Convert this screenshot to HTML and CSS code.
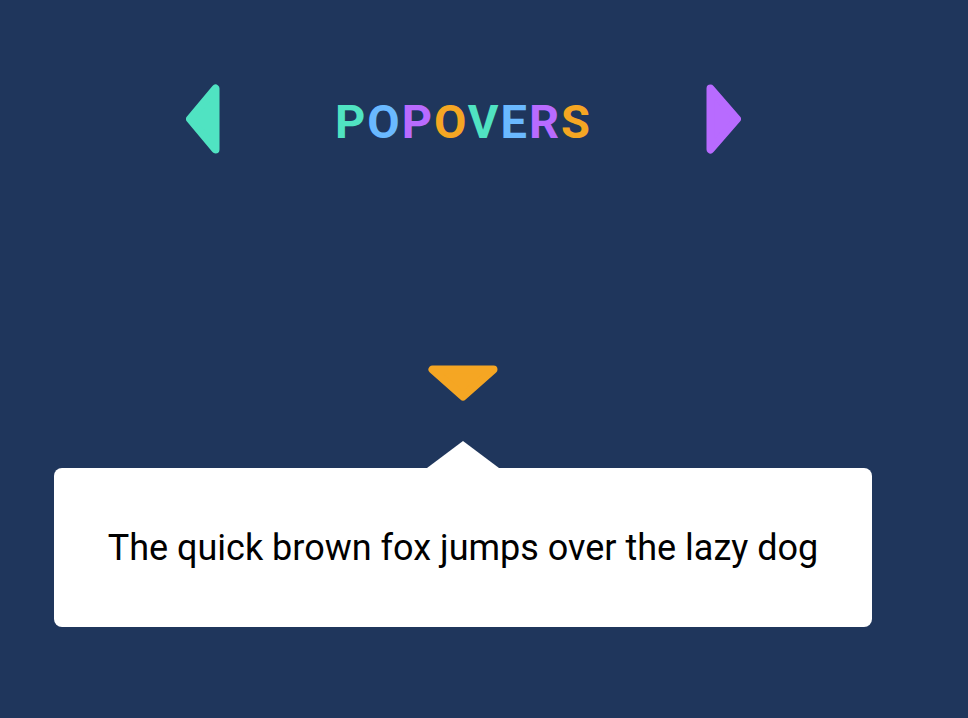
FILE: index.html
```html
<!DOCTYPE html>
<html>
<head>
<meta charset="utf-8">
<link rel="stylesheet" href="styles.css">
</head>
<body>
<div class="stage">
  <div class="header">
    <svg class="nav-arrow" width="34" height="70" viewBox="0 0 34 70"><polygon points="4,35 29.5,4.5 29.5,65.5" fill="#50e3c2" stroke="#50e3c2" stroke-width="8" stroke-linejoin="round"/></svg>
    <h1 class="title"><span class="c1">P</span><span class="c2">O</span><span class="c3">P</span><span class="c4">O</span><span class="c1">V</span><span class="c2">E</span><span class="c3">R</span><span class="c4 last">S</span></h1>
    <svg class="nav-arrow" width="35" height="70" viewBox="0 0 35 70"><polygon points="4.5,4.5 31,35 4.5,65.5" fill="#b86bff" stroke="#b86bff" stroke-width="8" stroke-linejoin="round"/></svg>
  </div>
  <div class="trigger">
    <svg width="70" height="36" viewBox="0 0 70 36"><polygon points="4.5,4.5 65.5,4.5 35,31.5" fill="#f5a623" stroke="#f5a623" stroke-width="8" stroke-linejoin="round"/></svg>
  </div>
  <div class="popover">
    <div class="notch"></div>
    <div class="popover-box">The quick brown fox jumps over the lazy dog</div>
  </div>
</div>
</body>
</html>
```
FILE: styles.css
```css
html, body {
  margin: 0;
  padding: 0;
  background: #1f365c;
  height: 100%;
}
.stage {
  width: 926px;
  display: flex;
  flex-direction: column;
  align-items: center;
  padding-top: 84px;
}
.header {
  width: 555px;
  display: flex;
  justify-content: space-between;
  align-items: center;
}
.nav-arrow {
  display: block;
}
.title {
  margin: 0;
  padding-top: 4px;
  font-family: Roboto, "Liberation Sans", sans-serif;
  font-weight: 700;
  font-size: 47px;
  letter-spacing: 2px;
  line-height: 1;
}
.title .last { letter-spacing: 0; }
.c1 { color: #50e3c2; }
.c2 { color: #6ab9ff; }
.c3 { color: #b86bff; }
.c4 { color: #f5a623; }
.trigger {
  margin-top: 211px;
  display: flex;
}
.trigger svg { display: block; }
.popover {
  margin-top: 40px;
  width: 818px;
  display: flex;
  flex-direction: column;
  align-items: center;
}
.notch {
  width: 72px;
  height: 27px;
  background: #fff;
  clip-path: polygon(50% 0, 100% 100%, 0 100%);
}
.popover-box {
  align-self: stretch;
  height: 159px;
  background: #fff;
  border-radius: 8px;
  display: flex;
  align-items: center;
  justify-content: center;
  font-family: Roboto, "Liberation Sans", sans-serif;
  font-size: 36px;
  color: #000;
}
```
